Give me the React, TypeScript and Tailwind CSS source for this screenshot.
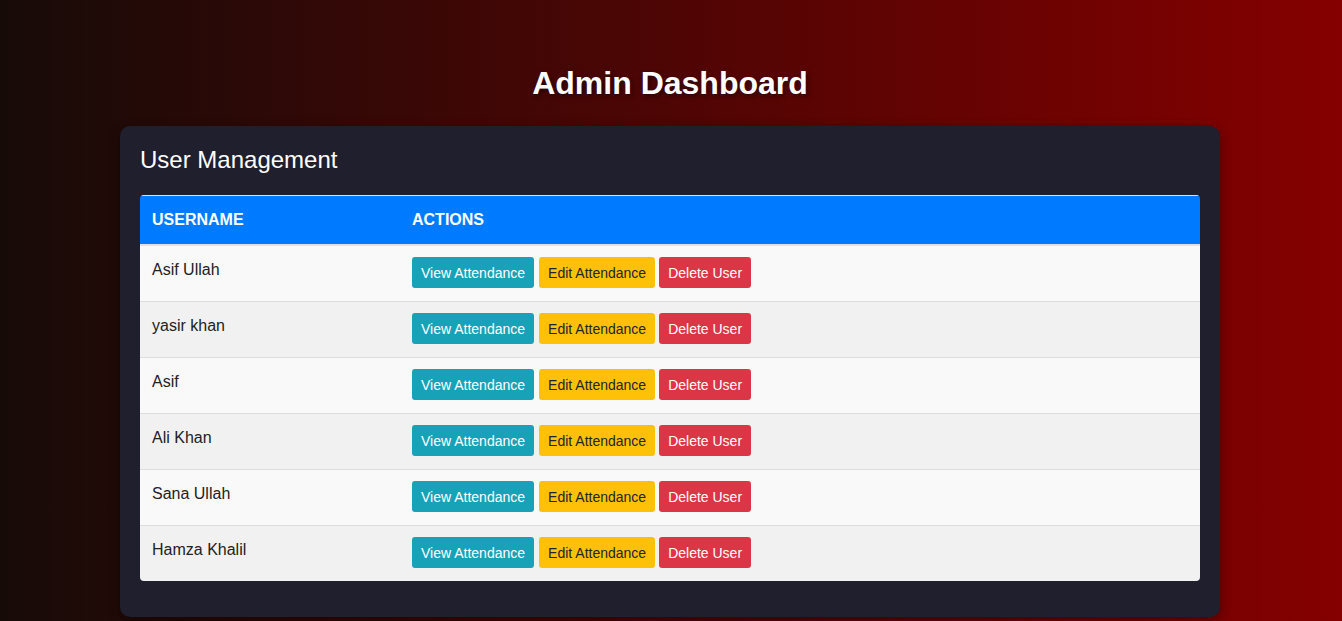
const users = ['Asif Ullah', 'yasir khan', 'Asif', 'Ali Khan', 'Sana Ullah', 'Hamza Khalil'];

export default function App() {
  return (
    <div className="min-h-[621px] bg-[linear-gradient(to_right,#170b08,#850000)] pr-[2px] pb-[5px] font-['Liberation_Sans',Arial,sans-serif]">
      <h1 className="pt-[65px] text-center text-[32px] leading-[37px] font-bold text-white [text-shadow:2px_2px_4px_rgba(0,0,0,0.5)]">
        Admin Dashboard
      </h1>

      <div className="mx-auto mt-[24px] w-[1100px] rounded-[10px] bg-[#1f1f2e] px-[20px] pt-[20px] pb-[36px] shadow-[0_4px_12px_rgba(0,0,0,0.4)]">
        <h2 className="mb-[21px] text-[24px] leading-[28px] text-white">User Management</h2>

        <div className="overflow-hidden rounded-[4px]">
          {/* Header */}
          <div className="flex h-[51px] border-t border-b-2 border-t-[#dee2e6] border-b-[#dee2e6] bg-[#007bff] text-[16px] font-bold uppercase text-white">
            <div className="flex w-[260px] items-center px-[12px]">Username</div>
            <div className="flex items-center px-[12px]">Actions</div>
          </div>

          {/* Rows */}
          {users.map((name, i) => (
            <div
              key={name}
              className={`flex border-[#dddddd] text-[16px] text-[#222] ${
                i % 2 === 0 ? 'bg-[#f9f9f9]' : 'bg-[#f1f1f1]'
              } ${i === users.length - 1 ? 'h-[55px]' : 'h-[56px] border-b'}`}
            >
              <div className="w-[260px] px-[12px] pt-[12px] leading-[24px]">{name}</div>
              <div className="flex px-[12px] pt-[11px] text-[14px] leading-[16px]">
                <button className="mr-[5px] h-[31px] rounded-[3px] bg-[#17a2b8] px-[9px] text-white">View Attendance</button>
                <button className="mr-[4px] h-[31px] rounded-[3px] bg-[#ffc107] px-[9px] text-[#212529]">Edit Attendance</button>
                <button className="h-[31px] rounded-[3px] bg-[#dc3545] px-[9px] text-white">Delete User</button>
              </div>
            </div>
          ))}
        </div>
      </div>
    </div>
  );
}
